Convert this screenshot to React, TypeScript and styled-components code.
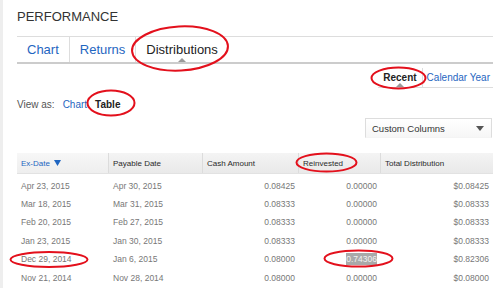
import React from "react";
import styled, { createGlobalStyle } from "styled-components";

const GlobalStyle = createGlobalStyle`
  html, body { margin: 0; padding: 0; background: #fff; }
  body { font-family: "Liberation Sans", Arial, sans-serif; }
  * { box-sizing: border-box; }
`;

const Page = styled.div`
  position: relative;
  width: 500px;
  height: 288px;
  overflow: hidden;
  border-left: 3px solid #eeeeee;
  padding: 9px 7px 0 14px;
`;

const Title = styled.div`
  font-size: 13px;
  line-height: 15px;
  color: #333;
`;

const TabBar = styled.div`
  display: flex;
  margin-top: 12px;
  height: 28px;
  border-top: 1px solid #dddddd;
  border-bottom: 2px solid #cccccc;
`;

const Tab = styled.div<{ $active?: boolean; $divider?: boolean }>`
  position: relative;
  display: flex;
  align-items: center;
  padding: 0 10px 0 10px;
  font-size: 13px;
  color: ${(p) => (p.$active ? "#222" : "#1f66c1")};
  border-right: ${(p) => (p.$divider ? "1px solid #dddddd" : "none")};
`;

const Caret = styled.span`
  position: absolute;
  left: 50%;
  bottom: 0;
  margin-left: -4px;
  width: 0;
  height: 0;
  border-left: 4px solid transparent;
  border-right: 4px solid transparent;
  border-bottom: 4px solid #9a9a9a;
`;

const SubRow = styled.div`
  display: flex;
  justify-content: flex-end;
  margin-top: 4px;
`;

const SubTabs = styled.div`
  display: flex;
  padding-right: 3px;
  border-bottom: 1px solid #dddddd;
  height: 20px;
`;

const SubTab = styled.div<{ $active?: boolean; $divider?: boolean }>`
  position: relative;
  display: flex;
  align-items: center;
  padding: 0 ${(p) => (p.$divider ? "5px" : "0")} 0
    ${(p) => (p.$divider ? "5px" : "4px")};
  font-size: 10px;
  font-weight: ${(p) => (p.$active ? "bold" : "normal")};
  color: ${(p) => (p.$active ? "#222" : "#1f66c1")};
  border-right: ${(p) => (p.$divider ? "1px solid #dddddd" : "none")};
`;

const ViewRow = styled.div`
  display: flex;
  align-items: center;
  gap: 8px;
  margin-top: 9px;
  height: 14px;
  font-size: 10px;
`;

const ViewLabel = styled.span`
  color: #555;
`;

const ViewLink = styled.span<{ $active?: boolean }>`
  color: ${(p) => (p.$active ? "#222" : "#1f66c1")};
  font-weight: ${(p) => (p.$active ? "bold" : "normal")};
`;

const SelectRow = styled.div`
  display: flex;
  justify-content: flex-end;
  margin-top: 7px;
  padding-right: 1px;
`;

const Select = styled.div`
  width: 127px;
  height: 20px;
  display: flex;
  align-items: center;
  justify-content: space-between;
  padding: 0 7px 0 6px;
  border: 1px solid #dddddd;
  border-bottom-color: #f4f4f4;
  background: linear-gradient(#ffffff, #f6f6f6);
  font-size: 9.5px;
  color: #333;
`;

const Arrow = styled.span`
  width: 0;
  height: 0;
  border-left: 4px solid transparent;
  border-right: 4px solid transparent;
  border-top: 5px solid #555;
`;

const Table = styled.div`
  margin-top: 15px;
  width: 476px;
`;

const cols = "91px 94px 96px 82px 1fr";

const HeadRow = styled.div`
  display: grid;
  grid-template-columns: ${cols};
  height: 21px;
  background: linear-gradient(#f4f4f4, #e9e9e9);
  border-bottom: 1px solid #e2e2e2;
`;

const HeadCell = styled.div<{ $first?: boolean; $sorted?: boolean }>`
  display: flex;
  align-items: center;
  gap: 4px;
  padding-left: 4px;
  border-left: ${(p) => (p.$first ? "none" : "1px solid #dcdcdc")};
  font-size: 8px;
  color: ${(p) => (p.$sorted ? "#1f66c1" : "#2a2a2a")};
  background: ${(p) =>
    p.$sorted ? "linear-gradient(#f7f7f7, #eeeeee)" : "transparent"};
`;

const Body = styled.div`
  padding-top: 2.5px;
`;

const Row = styled.div`
  display: grid;
  grid-template-columns: ${cols};
  height: 18.4px;
  align-items: center;
  font-size: 8.5px;
  color: #777;
`;

const Cell = styled.div<{ $num?: boolean; $pad?: number; $indent?: number }>`
  text-align: ${(p) => (p.$num ? "right" : "left")};
  padding-left: ${(p) => (p.$num ? "0" : `${p.$indent ?? 4}px`)};
  padding-right: ${(p) => (p.$num ? `${p.$pad ?? 3}px` : "0")};
  white-space: nowrap;
`;

const Selected = styled.span`
  background: #a9a9a9;
  color: #f2f2f2;
  padding: 1px 0;
`;

const Overlay = styled.svg`
  position: absolute;
  left: -3px;
  top: 0;
  pointer-events: none;
`;

const rows = [
  ["Apr 23, 2015", "Apr 30, 2015", "0.08425", "0.00000", "$0.08425"],
  ["Mar 18, 2015", "Mar 31, 2015", "0.08333", "0.00000", "$0.08333"],
  ["Feb 20, 2015", "Feb 27, 2015", "0.08333", "0.00000", "$0.08333"],
  ["Jan 23, 2015", "Jan 30, 2015", "0.08333", "0.00000", "$0.08333"],
  ["Dec 29, 2014", "Jan 6, 2015", "0.08000", "0.74306", "$0.82306"],
  ["Nov 21, 2014", "Nov 28, 2014", "0.08000", "0.00000", "$0.08000"],
];

export default function App() {
  return (
    <>
      <GlobalStyle />
      <Page>
        <Title>PERFORMANCE</Title>
        <TabBar>
          <Tab $divider>Chart</Tab>
          <Tab $divider>Returns</Tab>
          <Tab $active>
            Distributions
            <Caret />
          </Tab>
        </TabBar>
        <SubRow>
          <SubTabs>
            <SubTab $active $divider>
              Recent
              <Caret />
            </SubTab>
            <SubTab>Calendar Year</SubTab>
          </SubTabs>
        </SubRow>
        <ViewRow>
          <ViewLabel>View as:</ViewLabel>
          <ViewLink>Chart</ViewLink>
          <ViewLink $active>Table</ViewLink>
        </ViewRow>
        <SelectRow>
          <Select>
            <span>Custom Columns</span>
            <Arrow />
          </Select>
        </SelectRow>
        <Table>
          <HeadRow>
            <HeadCell $first $sorted>
              Ex-Date
              <svg width="7" height="6" viewBox="0 0 7 6">
                <path d="M0 0 L7 0 L3.5 6 Z" fill="#1f66c1" />
              </svg>
            </HeadCell>
            <HeadCell>Payable Date</HeadCell>
            <HeadCell>Cash Amount</HeadCell>
            <HeadCell>Reinvested</HeadCell>
            <HeadCell>Total Distribution</HeadCell>
          </HeadRow>
          <Body>
            {rows.map((r) => (
              <Row key={r[0]}>
                <Cell>{r[0]}</Cell>
                <Cell $indent={5}>{r[1]}</Cell>
                <Cell $num>{r[2]}</Cell>
                <Cell $num>
                  {r[3] === "0.74306" ? <Selected>{r[3]}</Selected> : r[3]}
                </Cell>
                <Cell $num $pad={4}>
                  {r[4]}
                </Cell>
              </Row>
            ))}
          </Body>
        </Table>
        <Overlay width="500" height="288" viewBox="0 0 500 288">
          <g fill="none" stroke="#e3101c" strokeWidth="2">
            <ellipse cx="180" cy="48.5" rx="48" ry="22" transform="rotate(-3 180 48.5)" />
            <ellipse cx="398.5" cy="78" rx="27" ry="10.5" />
            <ellipse cx="111" cy="103" rx="23.5" ry="12.5" />
            <ellipse cx="326.5" cy="162.5" rx="30" ry="9" />
            <ellipse cx="49" cy="259.5" rx="38.5" ry="7.5" />
            <ellipse cx="358.5" cy="258.5" rx="34" ry="8" />
          </g>
        </Overlay>
      </Page>
    </>
  );
}
